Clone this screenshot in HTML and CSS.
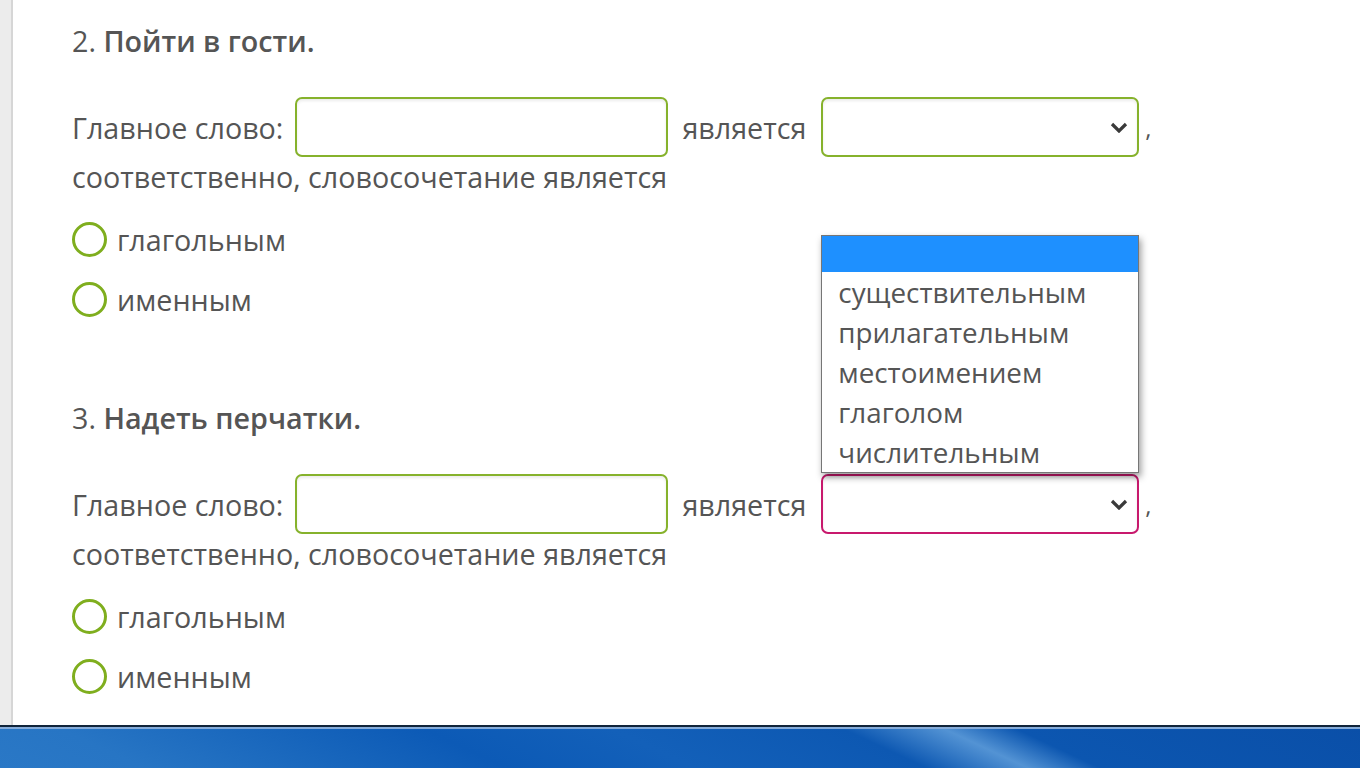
FILE: index.html
```html
<!DOCTYPE html>
<html lang="ru">
<head>
    <meta charset="UTF-8">
    <title>Словосочетания</title>
    <link rel="stylesheet" href="styles.css">
</head>
<body>
    <div class="window">
        <div class="side-strip"></div>

        <div class="content">
            <div class="task">
                <div class="task-title">2. <b>Пойти в гости.</b></div>
                <div class="sentence">
                    <span>Главное слово:</span>
                    <span class="field field-text"></span>
                    <span>является</span>
                    <span class="field field-select">
                        <svg class="arrow" width="18" height="11" viewBox="0 0 18 11"><path d="M2 2l7 7 7-7" fill="none" stroke="#3a3a3a" stroke-width="3.2"/></svg>
                        <div class="dropdown">
                            <div class="option selected"></div>
                            <div class="option">существительным</div>
                            <div class="option">прилагательным</div>
                            <div class="option">местоимением</div>
                            <div class="option">глаголом</div>
                            <div class="option">числительным</div>
                        </div>
                    </span>
                    <span class="comma">,</span>
                </div>
                <div class="sentence-end">соответственно, словосочетание является</div>
                <div class="choices">
                    <div class="choice"><span class="radio"></span>глагольным</div>
                    <div class="choice"><span class="radio"></span>именным</div>
                </div>
            </div>

            <div class="task">
                <div class="task-title">3. <b>Надеть перчатки.</b></div>
                <div class="sentence">
                    <span>Главное слово:</span>
                    <span class="field field-text"></span>
                    <span>является</span>
                    <span class="field field-select invalid">
                        <svg class="arrow" width="18" height="11" viewBox="0 0 18 11"><path d="M2 2l7 7 7-7" fill="none" stroke="#3a3a3a" stroke-width="3.2"/></svg>
                    </span>
                    <span class="comma">,</span>
                </div>
                <div class="sentence-end">соответственно, словосочетание является</div>
                <div class="choices">
                    <div class="choice"><span class="radio"></span>глагольным</div>
                    <div class="choice"><span class="radio"></span>именным</div>
                </div>
            </div>
        </div>
    </div>

    <div class="taskbar"></div>
</body>
</html>
```

FILE: styles.css
```css
body {
    margin: 0;
    padding: 0;
    font-family: "Open Sans", "Noto Sans", sans-serif;
    font-size: 28.7px;
    color: #555;
    background-color: #fff;
    height: 100vh;
    display: flex;
    flex-direction: column;
    overflow: hidden;
}

.window {
    display: flex;
    flex: 1;
    min-height: 0;
    overflow: hidden;
}

.side-strip {
    width: 11px;
    background-color: #ececec;
    border-right: 2px solid #d6d6d6;
}

.content {
    flex: 1;
    padding: 23px 0 0 59px;
}

.task {
    margin-bottom: 71px;
}

.task-title {
    line-height: 36px;
    color: #555;
}

.task-title b {
    font-weight: 600;
}

.sentence {
    display: flex;
    align-items: center;
    height: 60px;
    margin-top: 38px;
}

.field {
    display: block;
    position: relative;
    height: 56px;
    border: 2px solid #86b22c;
    border-radius: 7px;
    box-shadow: inset 0 2px 3px rgba(0, 0, 0, 0.08);
    background-color: #fff;
}

.field-text {
    width: 369px;
    margin: 0 14px 0 12px;
}

.field-select {
    width: 314px;
    margin: 0 6px 0 15px;
}

.field-select.invalid {
    border-color: #c8196d;
}

.arrow {
    position: absolute;
    right: 9px;
    top: 23px;
}

.comma {
    font-size: 24px;
}

/* open list of the first select */
.dropdown {
    position: absolute;
    top: 136px;
    left: -2px;
    width: 316px;
    background-color: #fff;
    border: 1px solid #767676;
    box-shadow: 2px 4px 7px rgba(0, 0, 0, 0.4);
    z-index: 10;
}

.option {
    height: 40px;
    line-height: 40px;
    padding-left: 16px;
    font-size: 27.8px;
}

.option.selected {
    height: 36px;
    background-color: #1e90ff;
}

.sentence-end {
    line-height: 36px;
    margin-top: 2px;
}

.choices {
    margin-top: 14px;
}

.choice {
    display: flex;
    align-items: center;
    height: 60px;
}

.radio {
    width: 29px;
    height: 29px;
    border: 3px solid #7fae1e;
    border-radius: 50%;
    margin-right: 10px;
}

.taskbar {
    flex-shrink: 0;
    height: 41px;
    border-top: 2px solid #10243a;
    box-shadow: inset 0 2px 0 #86acd9;
    background: linear-gradient(25deg, #2a78c6 0%, #2775c4 10%, #0c5ab6 35%, #1360b9 48%, #0d58b2 64%, #5393d4 71%, #0c56b0 76%, #0a4fa8 100%);
}
```
